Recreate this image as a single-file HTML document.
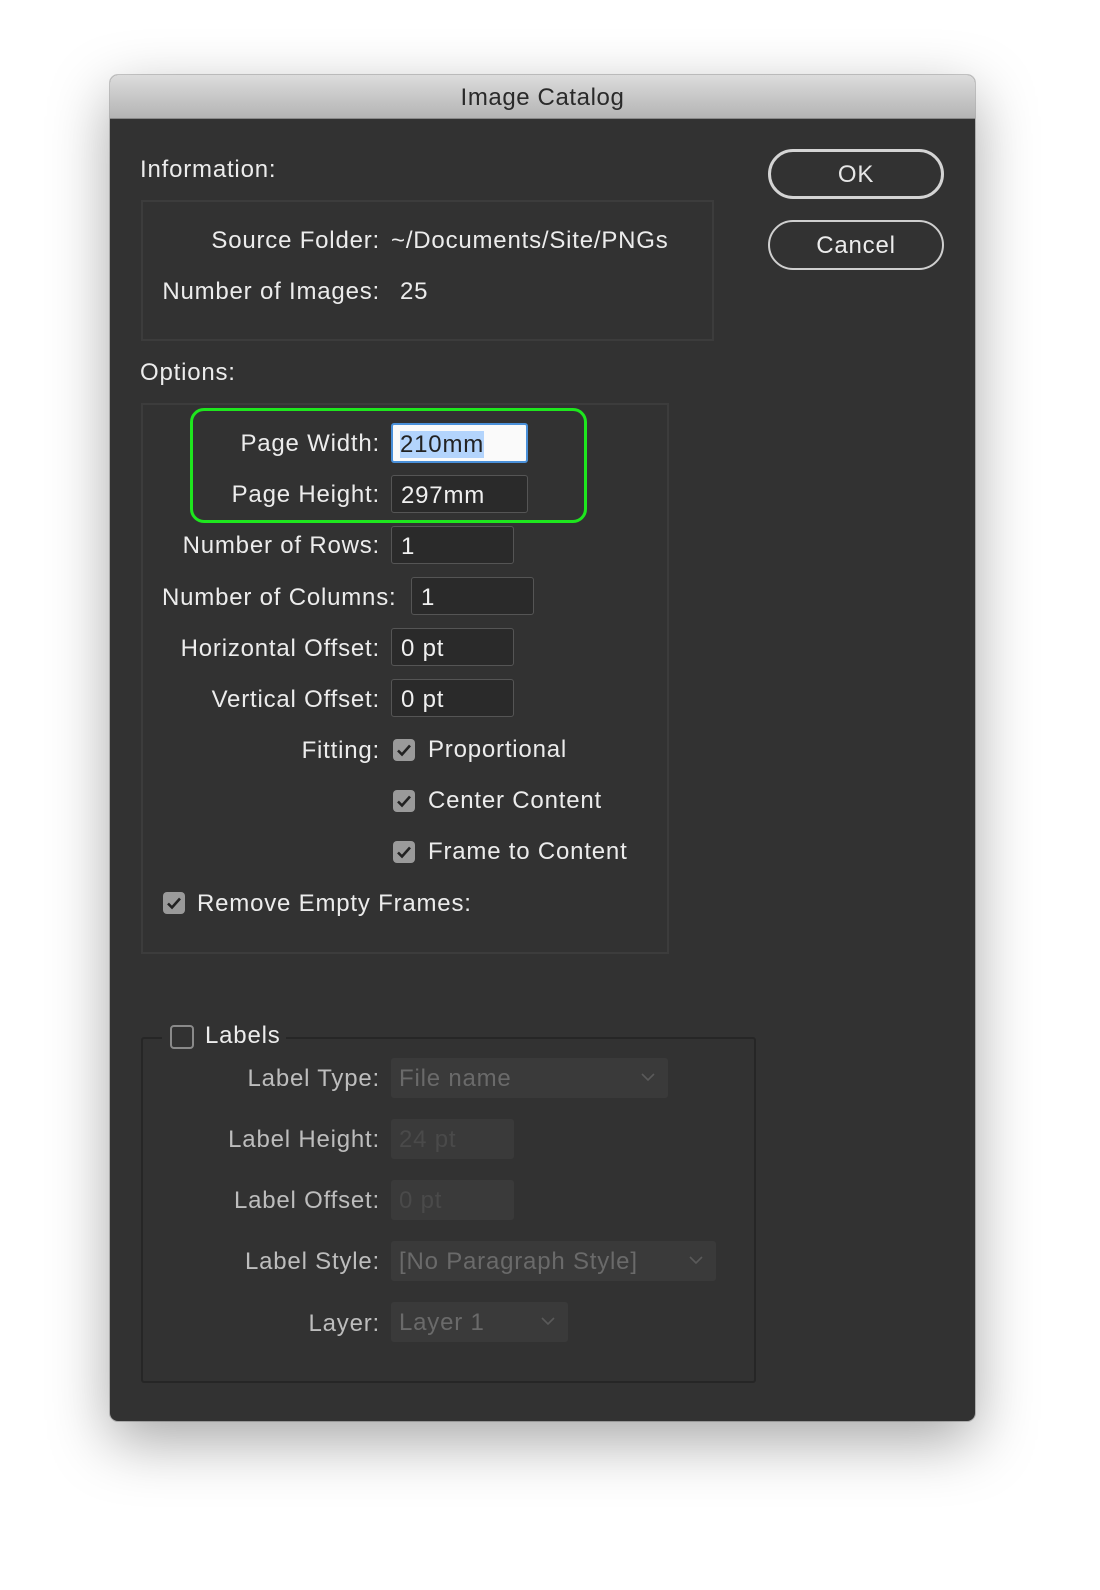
<!DOCTYPE html>
<html><head><style>
body{margin:0;width:1100px;height:1590px;background:#fff;font-family:"Liberation Sans",sans-serif;position:relative;overflow:hidden}
.dlg{position:absolute;left:110px;top:75px;width:865px;height:1346px;background:#323232;border-radius:8px;box-shadow:0 20px 60px rgba(0,0,0,.35),0 0 0 1px rgba(0,0,0,.2);overflow:hidden}
.tb{position:absolute;left:0;top:0;right:0;height:43px;background:linear-gradient(#dcdcdc,#b4b4b4);border-bottom:1px solid #888;text-align:center;line-height:45px;font-size:24px;color:#2a2a2a;letter-spacing:0.6px}
.a{position:absolute;font-size:24px;color:#ececec;line-height:40px;white-space:nowrap;letter-spacing:0.8px}
.l{left:0;width:380px;text-align:right}
.in{position:absolute;height:38px;border:1px solid #555;border-radius:3px;background:#2a2a2a;color:#f0f0f0;font-size:24px;line-height:40px;padding-left:9px;box-sizing:border-box;letter-spacing:0.8px}
.box{position:absolute;border:2px solid #3c3c3c}
.cb{position:absolute;width:22px;height:22px;border-radius:4px;background:#9a9a9a}
.cb svg{position:absolute;left:3px;top:3px}
.dis{color:#bdbdbd}
.df{position:absolute;height:40px;background:#3a3a3a;border-radius:3px;color:#6a6a6a;font-size:24px;line-height:42px;padding-left:8px;box-sizing:border-box;letter-spacing:0.8px}
.df.ph{color:#4a4a4a}
.chev{position:absolute;right:12px;top:13px}
.btn{position:absolute;left:768px;width:176px;border-radius:26px;color:#e6e6e6;font-size:24px;text-align:center;box-sizing:border-box;letter-spacing:0.8px}
</style></head><body>
<div class="dlg"><div class="tb">Image Catalog</div></div>

<div class="btn" style="top:149px;height:50px;border:3px solid #d4d4d4;line-height:46px">OK</div>
<div class="btn" style="top:220px;height:50px;border:2px solid #cfcfcf;line-height:48px;color:#ececec">Cancel</div>

<div class="a" style="left:140px;top:150px">Information:</div>
<div class="box" style="left:141px;top:200px;width:569px;height:137px"></div>
<div class="a l" style="top:221px">Source Folder:</div>
<div class="a" style="left:391px;top:221px">~/Documents/Site/PNGs</div>
<div class="a l" style="top:272px">Number of Images:</div>
<div class="a" style="left:400px;top:272px">25</div>

<div class="a" style="left:140px;top:353px">Options:</div>
<div class="box" style="left:141px;top:403px;width:524px;height:547px"></div>
<div style="position:absolute;left:190px;top:408px;width:397px;height:115px;border:3px solid #1ee61e;border-radius:14px;box-sizing:border-box"></div>

<div class="a l" style="top:424px">Page Width:</div>
<div class="in" style="left:391px;top:423px;width:137px;height:40px;background:#fafafa;border:2px solid #4a90d9;color:#222;padding-left:7px"><span style="background:#b3d4fc">210mm</span></div>
<div class="a l" style="top:475px">Page Height:</div>
<div class="in" style="left:391px;top:475px;width:137px">297mm</div>
<div class="a l" style="top:526px">Number of Rows:</div>
<div class="in" style="left:391px;top:526px;width:123px">1</div>
<div class="a" style="left:162px;top:578px">Number of Columns:</div>
<div class="in" style="left:411px;top:577px;width:123px">1</div>
<div class="a l" style="top:629px">Horizontal Offset:</div>
<div class="in" style="left:391px;top:628px;width:123px">0 pt</div>
<div class="a l" style="top:680px">Vertical Offset:</div>
<div class="in" style="left:391px;top:679px;width:123px">0 pt</div>
<div class="a l" style="top:731px">Fitting:</div>

<div class="cb" style="left:393px;top:739px"><svg width="16" height="16"><path d="M2 8.5l4 4 8-9" stroke="#222" stroke-width="2.6" fill="none"/></svg></div>
<div class="a" style="left:428px;top:730px">Proportional</div>
<div class="cb" style="left:393px;top:790px"><svg width="16" height="16"><path d="M2 8.5l4 4 8-9" stroke="#222" stroke-width="2.6" fill="none"/></svg></div>
<div class="a" style="left:428px;top:781px">Center Content</div>
<div class="cb" style="left:393px;top:841px"><svg width="16" height="16"><path d="M2 8.5l4 4 8-9" stroke="#222" stroke-width="2.6" fill="none"/></svg></div>
<div class="a" style="left:428px;top:832px">Frame to Content</div>
<div class="cb" style="left:163px;top:892px"><svg width="16" height="16"><path d="M2 8.5l4 4 8-9" stroke="#222" stroke-width="2.6" fill="none"/></svg></div>
<div class="a" style="left:197px;top:884px">Remove Empty Frames:</div>

<div class="box" style="left:141px;top:1037px;width:611px;height:342px;border-color:#262626;border-radius:3px"></div>
<div style="position:absolute;left:162px;top:1020px;width:124px;height:34px;background:#323232"></div>
<div style="position:absolute;left:170px;top:1025px;width:20px;height:20px;border:2px solid #8a8a8a;border-radius:4px"></div>
<div class="a" style="left:205px;top:1016px">Labels</div>

<div class="a l dis" style="top:1059px">Label Type:</div>
<div class="df" style="left:391px;top:1058px;width:277px">File name<svg class="chev" width="16" height="12"><path d="M2 3l6 6 6-6" stroke="#5a5a5a" stroke-width="1.6" fill="none"/></svg></div>
<div class="a l dis" style="top:1120px">Label Height:</div>
<div class="df ph" style="left:391px;top:1119px;width:123px">24 pt</div>
<div class="a l dis" style="top:1181px">Label Offset:</div>
<div class="df ph" style="left:391px;top:1180px;width:123px">0 pt</div>
<div class="a l dis" style="top:1242px">Label Style:</div>
<div class="df" style="left:391px;top:1241px;width:325px">[No Paragraph Style]<svg class="chev" width="16" height="12"><path d="M2 3l6 6 6-6" stroke="#5a5a5a" stroke-width="1.6" fill="none"/></svg></div>
<div class="a l dis" style="top:1304px">Layer:</div>
<div class="df" style="left:391px;top:1302px;width:177px">Layer 1<svg class="chev" width="16" height="12"><path d="M2 3l6 6 6-6" stroke="#5a5a5a" stroke-width="1.6" fill="none"/></svg></div>
</body></html>
